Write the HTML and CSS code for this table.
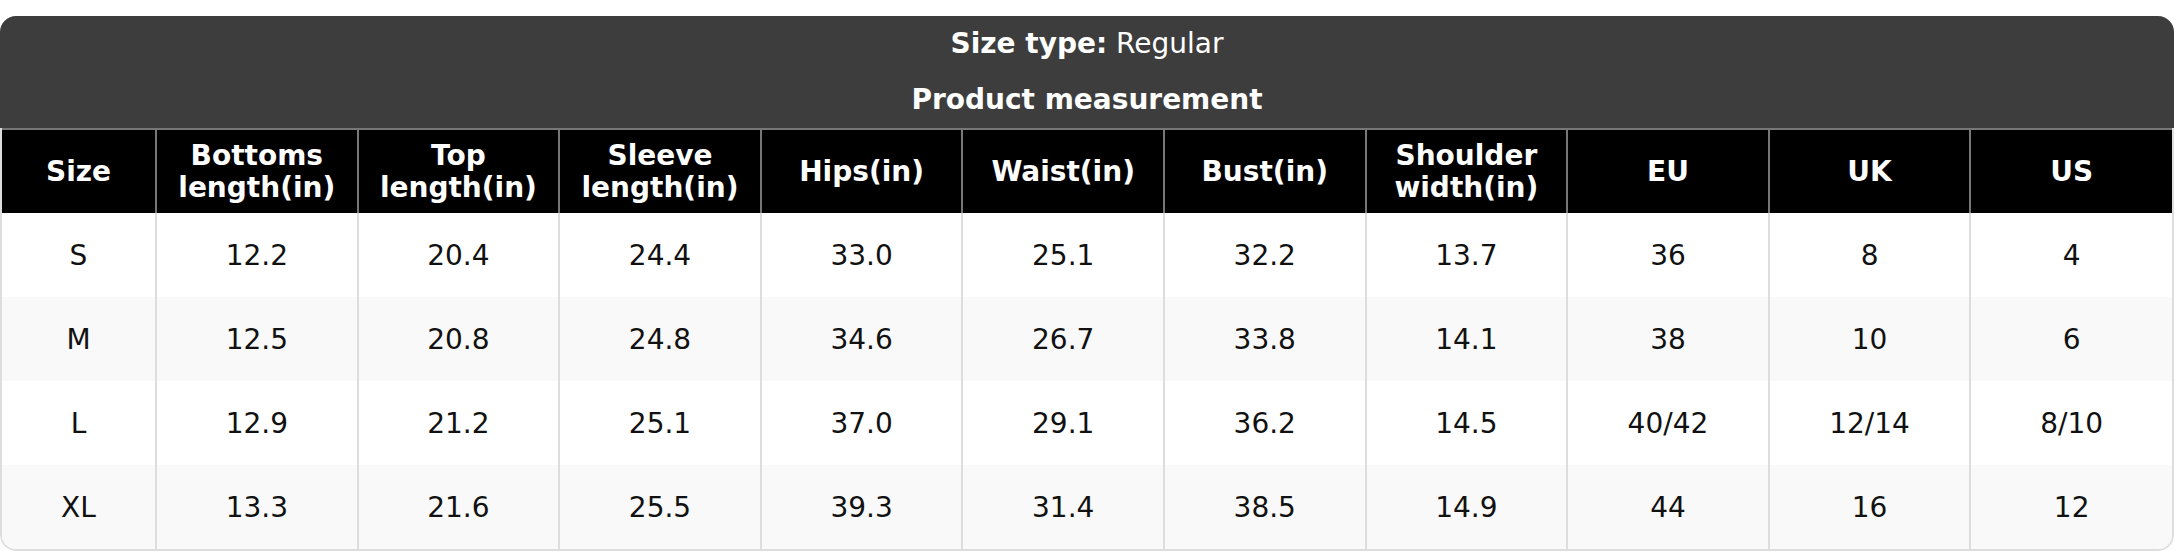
FILE: index.html
```html
<!DOCTYPE html>
<html>
<head>
<meta charset="utf-8">
<link rel="stylesheet" href="styles.css">
</head>
<body>
<div class="card">
  <div class="titles">
    <div class="title-row"><b>Size type:</b> Regular</div>
    <div class="title-row"><b>Product measurement</b></div>
  </div>
  <div class="table-wrap">
    <table class="sizes">
      <colgroup>
        <col class="c-size">
        <col><col><col><col><col><col><col><col><col><col>
      </colgroup>
      <thead>
        <tr>
          <th>Size</th>
          <th>Bottoms<br>length(in)</th>
          <th>Top<br>length(in)</th>
          <th>Sleeve<br>length(in)</th>
          <th>Hips(in)</th>
          <th>Waist(in)</th>
          <th>Bust(in)</th>
          <th>Shoulder<br>width(in)</th>
          <th>EU</th>
          <th>UK</th>
          <th>US</th>
        </tr>
      </thead>
      <tbody>
        <tr><td>S</td><td>12.2</td><td>20.4</td><td>24.4</td><td>33.0</td><td>25.1</td><td>32.2</td><td>13.7</td><td>36</td><td>8</td><td>4</td></tr>
        <tr><td>M</td><td>12.5</td><td>20.8</td><td>24.8</td><td>34.6</td><td>26.7</td><td>33.8</td><td>14.1</td><td>38</td><td>10</td><td>6</td></tr>
        <tr><td>L</td><td>12.9</td><td>21.2</td><td>25.1</td><td>37.0</td><td>29.1</td><td>36.2</td><td>14.5</td><td>40/42</td><td>12/14</td><td>8/10</td></tr>
        <tr><td>XL</td><td>13.3</td><td>21.6</td><td>25.5</td><td>39.3</td><td>31.4</td><td>38.5</td><td>14.9</td><td>44</td><td>16</td><td>12</td></tr>
      </tbody>
    </table>
  </div>
</div>
</body>
</html>
```

FILE: styles.css
```css
html, body {
  margin: 0;
  padding: 0;
  background: #ffffff;
}
body {
  font-family: "DejaVu Sans", "Liberation Sans", sans-serif;
  font-size: 28px;
  color: #111111;
}
.card {
  margin-top: 16px;
  width: 2174px;
  border-radius: 16px;
  overflow: hidden;
}
.titles {
  background: #3d3d3d;
  color: #ffffff;
  text-align: center;
}
.title-row {
  height: 56px;
  line-height: 56px;
}
.title-row b {
  font-weight: bold;
}
.table-wrap {
  border: 2px solid #dddddd;
  border-top: none;
  border-radius: 0 0 16px 16px;
  overflow: hidden;
}
.sizes {
  width: 100%;
  table-layout: fixed;
  border-collapse: collapse;
}
.c-size {
  width: 154px;
}
.sizes th {
  background: #000000;
  color: #ffffff;
  font-weight: bold;
  height: 83px;
  padding: 0 4px;
  border: 2px solid #777777;
  border-bottom: none;
  line-height: 32px;
  text-align: center;
}
.sizes th:first-child {
  border-left: none;
}
.sizes th:last-child {
  border-right: none;
}
.sizes td {
  height: 84px;
  padding: 0 4px;
  text-align: center;
  border-left: 2px solid #dddddd;
  border-right: 2px solid #dddddd;
}
.sizes td:first-child {
  border-left: none;
}
.sizes td:last-child {
  border-right: none;
}
.sizes tbody tr:nth-child(even) td {
  background: #f9f9f9;
}
```
